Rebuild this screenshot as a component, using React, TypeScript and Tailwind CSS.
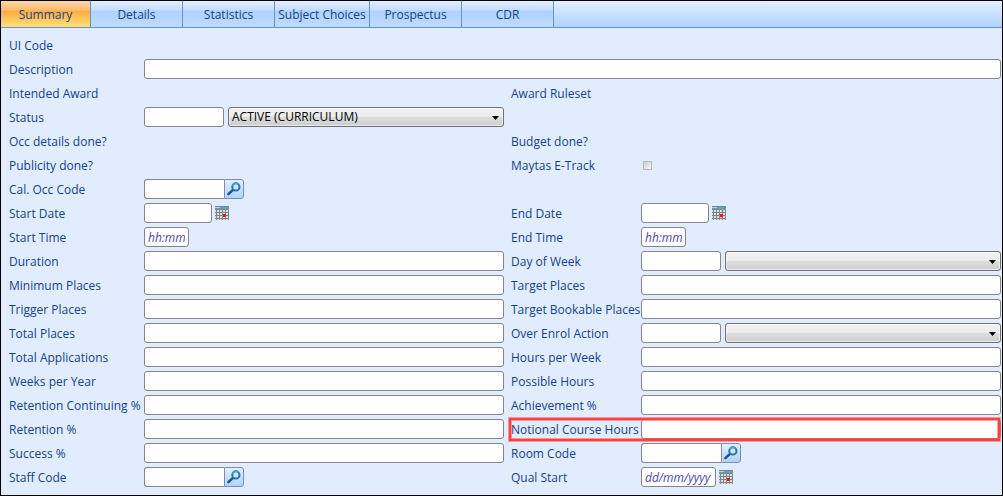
import { useId, type ReactNode } from "react";

type Field =
  | { kind: "none" }
  | { kind: "text" }
  | { kind: "select"; value?: string }
  | { kind: "lookup" }
  | { kind: "date"; placeholder?: string }
  | { kind: "time" }
  | { kind: "check" };

type Cell = { label: string; field: Field; wide?: boolean; marked?: boolean };

const tabs = [
  { name: "Summary", width: "w-[90px]" },
  { name: "Details", width: "w-[92px]" },
  { name: "Statistics", width: "w-[92px]" },
  { name: "Subject Choices", width: "w-[95px]" },
  { name: "Prospectus", width: "w-[92px]" },
  { name: "CDR", width: "w-[92px]" },
];

const rows: [Cell, Cell?][] = [
  [{ label: "UI Code", field: { kind: "none" } }],
  [{ label: "Description", field: { kind: "text" }, wide: true }],
  [
    { label: "Intended Award", field: { kind: "none" } },
    { label: "Award Ruleset", field: { kind: "none" } },
  ],
  [{ label: "Status", field: { kind: "select", value: "ACTIVE (CURRICULUM)" } }],
  [
    { label: "Occ details done?", field: { kind: "none" } },
    { label: "Budget done?", field: { kind: "none" } },
  ],
  [
    { label: "Publicity done?", field: { kind: "none" } },
    { label: "Maytas E-Track", field: { kind: "check" } },
  ],
  [{ label: "Cal. Occ Code", field: { kind: "lookup" } }],
  [
    { label: "Start Date", field: { kind: "date" } },
    { label: "End Date", field: { kind: "date" } },
  ],
  [
    { label: "Start Time", field: { kind: "time" } },
    { label: "End Time", field: { kind: "time" } },
  ],
  [
    { label: "Duration", field: { kind: "text" } },
    { label: "Day of Week", field: { kind: "select" } },
  ],
  [
    { label: "Minimum Places", field: { kind: "text" } },
    { label: "Target Places", field: { kind: "text" } },
  ],
  [
    { label: "Trigger Places", field: { kind: "text" } },
    { label: "Target Bookable Places", field: { kind: "text" } },
  ],
  [
    { label: "Total Places", field: { kind: "text" } },
    { label: "Over Enrol Action", field: { kind: "select" } },
  ],
  [
    { label: "Total Applications", field: { kind: "text" } },
    { label: "Hours per Week", field: { kind: "text" } },
  ],
  [
    { label: "Weeks per Year", field: { kind: "text" } },
    { label: "Possible Hours", field: { kind: "text" } },
  ],
  [
    { label: "Retention Continuing %", field: { kind: "text" } },
    { label: "Achievement %", field: { kind: "text" } },
  ],
  [
    { label: "Retention %", field: { kind: "text" } },
    { label: "Notional Course Hours", field: { kind: "text" }, marked: true },
  ],
  [
    { label: "Success %", field: { kind: "text" } },
    { label: "Room Code", field: { kind: "lookup" } },
  ],
  [
    { label: "Staff Code", field: { kind: "lookup" } },
    { label: "Qual Start", field: { kind: "date", placeholder: "dd/mm/yyyy" } },
  ],
];

const box =
  "block h-5 rounded-[3px] border border-[#84858c] bg-white px-[3px] text-xs text-black outline-none placeholder:italic placeholder:text-[#4a4aae] placeholder:opacity-100";

function SearchIcon() {
  return (
    <svg viewBox="0 0 14 14" className="size-3.5" aria-hidden="true">
      <path d="M1.4 12.2 L6 7.8" stroke="#1d4f96" strokeWidth="2.4" strokeLinecap="round" />
      <circle cx="8.9" cy="4.9" r="3.6" fill="#cfe6ff" stroke="#2470b0" strokeWidth="2" />
      <path d="M5.6 3.6 A3.6 3.6 0 0 1 11.5 2.4" fill="none" stroke="#4ba3cf" strokeWidth="1.6" />
    </svg>
  );
}

function CalendarIcon() {
  return (
    <svg viewBox="0 0 14 14" className="size-3.5" shapeRendering="crispEdges" aria-hidden="true">
      <rect width="14" height="14" fill="#d9dddf" />
      <rect width="14" height="3" fill="#5fa3c2" />
      <rect width="14" height="1" fill="#6f8794" />
      <rect width="5" y="1" height="1" fill="#a5d8ee" />
      <path
        d="M1.5 3V14M4.5 3V14M7.5 3V14M10.5 3V14M13.5 3V14M0 3.5H14M0 6.5H14M0 9.5H14M0 12.5H14"
        stroke="#808587"
        strokeWidth="1"
      />
      <rect x="8" y="8" width="3" height="3" fill="#f01818" />
    </svg>
  );
}

function Control({ field, id, label }: { field: Field; id: string; label: string }): ReactNode {
  switch (field.kind) {
    case "text":
      return <input id={id} type="text" className={`${box} w-full`} />;
    case "select":
      return (
        <div className="flex gap-1">
          <input id={id} type="text" className={`${box} w-20`} />
          <div className="relative min-w-0 flex-1">
            <select
              aria-label={`${label} name`}
              className="block h-5 w-full appearance-none rounded-[3px] border border-[#707070] bg-[linear-gradient(to_bottom,#f2f2f2,#ebebeb_50%,#dddddd_50%,#cdcdcd)] px-[3px] text-xs text-black shadow-[inset_0_0_0_1px_rgba(255,255,255,0.6)] outline-none"
            >
              <option>{field.value ?? ""}</option>
            </select>
            <svg
              viewBox="0 0 7 4"
              className="pointer-events-none absolute top-[9px] right-[5px] h-1 w-[7px]"
              aria-hidden="true"
            >
              <path d="M0 0H7L3.5 4Z" fill="#000" />
            </svg>
          </div>
        </div>
      );
    case "lookup":
      return (
        <div className="flex">
          <input id={id} type="text" className={`${box} w-20 rounded-r-none border-r-0`} />
          <button
            type="button"
            aria-label={`Find ${label}`}
            className="flex h-5 w-5 items-center justify-center rounded-r-[3px] border border-[#7f8da6] bg-linear-to-b from-[#e3efff] to-[#afd2ff]"
          >
            <SearchIcon />
          </button>
        </div>
      );
    case "date":
      return (
        <div className="flex items-center gap-[3px]">
          <input
            id={id}
            type="text"
            placeholder={field.placeholder}
            className={`${box} ${field.placeholder ? "w-[75px]" : "w-[68px]"}`}
          />
          <button type="button" aria-label={`Pick ${label}`}>
            <CalendarIcon />
          </button>
        </div>
      );
    case "time":
      return <input id={id} type="text" placeholder="hh:mm" className={`${box} w-[45px]`} />;
    case "check":
      return (
        <input
          id={id}
          type="checkbox"
          className="ml-0.5 block size-[9px] appearance-none border border-[#b4b8bd] bg-linear-to-br from-[#cdd0d5] to-[#f6f6f6]"
        />
      );
    default:
      return null;
  }
}

function FormCell({ cell, right }: { cell: Cell; right?: boolean }) {
  const id = useId();
  const labelClass = `pt-0.5 text-xs font-medium whitespace-nowrap text-[#15428b] ${right ? "pl-[7px]" : ""}`;
  return (
    <div
      className={`relative grid h-6 grid-cols-subgrid items-center ${
        cell.wide ? "col-span-4" : "col-span-2"
      } ${right ? "col-start-3" : "col-start-1"}`}
    >
      {cell.field.kind === "none" ? (
        <span className={labelClass}>{cell.label}</span>
      ) : (
        <label htmlFor={id} className={labelClass}>
          {cell.label}
        </label>
      )}
      <div className={cell.wide ? "col-span-3" : ""}>
        <Control field={cell.field} id={id} label={cell.label} />
      </div>
      {cell.marked && (
        <div className="pointer-events-none absolute top-px right-px bottom-0 left-[5px] border-2 border-[#ff4040] shadow-[0_0_0_1px_rgba(255,64,64,0.5),inset_0_0_0_1px_rgba(255,64,64,0.5)]" />
      )}
    </div>
  );
}

export default function App() {
  return (
    <main className="min-h-screen border border-black bg-[#e1edff] font-['Open_Sans',sans-serif]">
      <nav className="flex h-[27px] border-b border-[#6593cf] bg-linear-to-b from-[#e3efff] to-[#afd2ff]">
        {tabs.map((tab, i) => (
          <button
            key={tab.name}
            type="button"
            aria-current={i === 0 ? "page" : undefined}
            className={`${tab.width} border-r border-[#6593cf] pt-0.5 text-xs whitespace-nowrap text-[#15428b] ${
              i === 0
                ? "bg-[linear-gradient(to_bottom,#ffd9aa,#ffbb6e_36%,#ffab3f_38%,#fee17a)]"
                : "bg-[linear-gradient(to_bottom,#e3efff,#c4ddff_36%,#add1ff_38%,#c0dbff)]"
            }`}
          >
            {tab.name}
          </button>
        ))}
      </nav>
      <form className="grid grid-cols-[135px_minmax(0,1fr)_137px_minmax(0,1fr)] pt-[5px] pr-px pb-1 pl-2">
        {rows.map(([left, right]) => (
          <div key={left.label} className="contents">
            <FormCell cell={left} />
            {right && <FormCell cell={right} right />}
          </div>
        ))}
      </form>
    </main>
  );
}
